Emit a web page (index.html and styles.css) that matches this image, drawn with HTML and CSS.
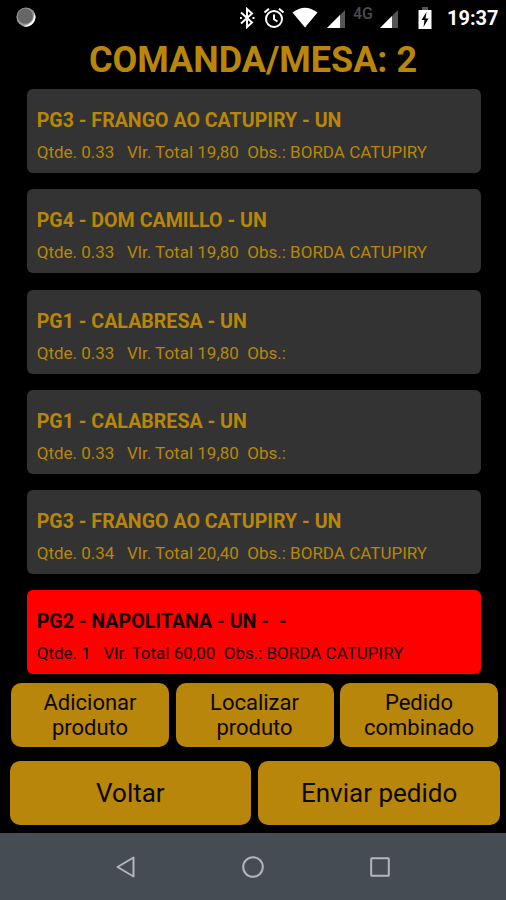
FILE: index.html
```html
<!DOCTYPE html>
<html lang="pt-BR">
<head>
<meta charset="utf-8">
<title>Comanda/Mesa 2</title>
<link rel="stylesheet" href="styles.css">
</head>
<body>
<header class="status">
  <svg class="moon" width="20" height="20" viewBox="0 0 20 20"><circle cx="10" cy="10" r="9.6" fill="#999"/><path d="M18.5 6A9.6 9.6 0 0 1 7 19.2C14 18 18 14 18.500 6Z" fill="#fff"/><circle cx="9.300" cy="9.200" r="7.600" fill="#666"/></svg>
  <svg class="bt" width="16" height="22" viewBox="0 0 16 22" fill="none" stroke="#fff" stroke-width="2"><path d="M2 5.500L13 15.500L8 20V2L13 6.500L2 16.500"/><path d="M1 11h1.800M13.500 11h2"/></svg>
  <svg class="alarm" width="22" height="22" viewBox="0 0 22 22" fill="none" stroke="#fff" stroke-width="2"><circle cx="11" cy="12" r="8"/><path d="M11 7.500V12.300L14.500 14.500M1.500 5.500L6 1.700M20.500 5.500L16 1.700"/></svg>
  <svg class="wifi" width="26" height="21" viewBox="0 0 26 21"><path d="M.5 5.500Q13-4 25.500 5.500L13 20.500Z" fill="#fff"/></svg>
  <svg class="signal" width="18" height="18" viewBox="0 0 18 18"><path d="M0 18L18 0V18Z" fill="#555"/><path d="M0 18L13 5V18Z" fill="#fff"/></svg>
  <span class="network">4G</span>
  <svg class="signal second" width="18" height="18" viewBox="0 0 18 18"><path d="M0 18L18 0V18Z" fill="#555"/><path d="M0 18L12 6V18Z" fill="#fff"/></svg>
  <svg class="battery" width="14" height="22" viewBox="0 0 14 22"><path d="M4 0h6v3H4Z" fill="#555"/><path d="M.5 3h13v19H.5Z" fill="#fff"/><path d="M8.500 5L3.500 13H6.500L5.500 20L10.500 11.500H7.500Z" fill="#000"/></svg>
  <time class="clock">19:37</time>
</header>
<h1 class="title">COMANDA/MESA: 2</h1>
<main class="orders">
  <article class="card"><h2>PG3 - FRANGO AO CATUPIRY - UN</h2><p>Qtde. 0.33   Vlr. Total 19,80  Obs.: BORDA CATUPIRY</p></article>
  <article class="card"><h2>PG4 - DOM CAMILLO - UN</h2><p>Qtde. 0.33   Vlr. Total 19,80  Obs.: BORDA CATUPIRY</p></article>
  <article class="card"><h2>PG1 - CALABRESA - UN</h2><p>Qtde. 0.33   Vlr. Total 19,80  Obs.:</p></article>
  <article class="card"><h2>PG1 - CALABRESA - UN</h2><p>Qtde. 0.33   Vlr. Total 19,80  Obs.:</p></article>
  <article class="card"><h2>PG3 - FRANGO AO CATUPIRY - UN</h2><p>Qtde. 0.34   Vlr. Total 20,40  Obs.: BORDA CATUPIRY</p></article>
  <article class="card selected"><h2>PG2 - NAPOLITANA - UN -  -</h2><p>Qtde. 1   Vlr. Total 60,00  Obs.: BORDA CATUPIRY</p></article>
</main>
<section class="tools">
  <button>Adicionar<br>produto</button>
  <button>Localizar<br>produto</button>
  <button>Pedido<br>combinado</button>
</section>
<section class="actions">
  <button>Voltar</button>
  <button>Enviar pedido</button>
</section>
<nav class="navbar">
  <svg width="24" height="24" viewBox="0 0 24 24"><path d="M3.500 12L19.500 2.500V21.500Z"/></svg>
  <svg width="24" height="24" viewBox="0 0 24 24"><circle cx="12" cy="12" r="9.800"/></svg>
  <svg width="24" height="24" viewBox="0 0 24 24"><rect x="3.200" y="3.200" width="17.600" height="17.600" rx=".5"/></svg>
</nav>
</body>
</html>
```
FILE: styles.css
```css
* { box-sizing: border-box; }
body {
  margin: 0;
  width: 506px;
  height: 900px;
  overflow: hidden;
  display: flex;
  flex-direction: column;
  background: #000;
  color: #b8860b;
  font-family: Roboto, "Liberation Sans", sans-serif;
}
h1, h2, p { margin: 0; white-space: pre; }
svg { display: block; flex: none; }
.status {
  height: 36px;
  flex: none;
  display: flex;
  align-items: flex-start;
  padding: 7px 0 0 16px;
}
.bt { margin-left: 203px; }
.alarm { margin-left: 8px; }
.wifi { margin-left: 7px; }
.signal { margin: 3px 0 0 9px; }
.network {
  width: 21px;
  margin-left: 8px;
  font-size: 16px;
  line-height: 13px;
  font-weight: 500;
  color: #4c4c4c;
}
.signal.second { margin-left: 6px; }
.battery { margin-left: 20px; }
.clock {
  margin-left: 15px;
  color: #fff;
  font-size: 20px;
  line-height: 22px;
  font-weight: 700;
}
.title {
  height: 53px;
  flex: none;
  text-align: center;
  font-size: 36px;
  line-height: 48px;
  font-weight: 700;
}
.orders {
  display: flex;
  flex-direction: column;
  gap: 16.300px;
  padding: 0 25.300px 0 26.700px;
}
.card {
  height: 84px;
  padding: 19px 10px 0;
  border-radius: 6px;
  background: #333;
}
.card h2 { font-size: 19.600px; line-height: 25px; font-weight: 700; }
.card p { margin-top: 8px; font-size: 17px; line-height: 22px; }
.card.selected { background: #f00; color: #100; }
button {
  border: 0;
  padding: 0;
  border-radius: 10px;
  background: #b8860b;
  color: #0c0800;
  font-family: inherit;
}
.tools {
  display: grid;
  grid-template-columns: repeat(3, 1fr);
  gap: 6.500px;
  height: 64px;
  flex: none;
  margin: 9px 8px 0 11px;
}
.tools button { font-size: 22px; line-height: 25px; }
.actions {
  display: grid;
  grid-template-columns: 1fr 1fr;
  gap: 7px;
  height: 64px;
  flex: none;
  margin: 13.500px 6px 0 9.500px;
}
.actions button { font-size: 26px; }
.navbar {
  height: 67px;
  flex: none;
  margin-top: auto;
  display: flex;
  justify-content: center;
  align-items: center;
  gap: 103px;
  background: #454c52;
}
.navbar svg { fill: none; stroke: #b1b6b9; stroke-width: 2; stroke-linejoin: round; }
```
